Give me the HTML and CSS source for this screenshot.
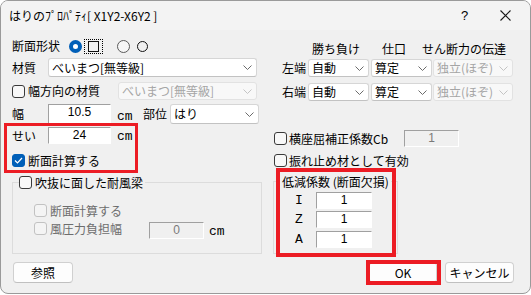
FILE: index.html
```html
<!DOCTYPE html>
<html lang="ja">
<head>
<meta charset="utf-8">
<title>はりのプロパティ</title>
<link rel="stylesheet" href="styles.css">
</head>
<body>
<div class="win">
  <div class="titlebar">
    <span class="title">はりのﾌﾟﾛﾊﾟﾃｨ[ X1Y2-X6Y2 ]</span>
    <span class="help">?</span>
    <svg class="close" width="11" height="11" viewBox="0 0 11 11"><path d="M0.5 0.5 L10.5 10.5 M10.5 0.5 L0.5 10.5" stroke="#1a1a1a" stroke-width="1.1" fill="none"/></svg>
  </div>
  <div class="main">
    <div class="left">
      <div class="row r1">
        <span class="lbl">断面形状</span>
        <span class="radio on"></span>
        <span class="focus"><span class="sq"></span></span>
        <span class="radio"></span>
        <span class="circ"></span>
      </div>
      <div class="row r2">
        <span class="lbl w36">材質</span>
        <div class="sel w209"><span class="st">べいまつ[無等級]</span><svg class="chev" width="9" height="5" viewBox="0 0 9 5"><polyline points="0.5,0.5 4.5,4.5 8.5,0.5" fill="none" stroke="#6b6b6b" stroke-width="1"/></svg></div>
      </div>
      <div class="row r3">
        <span class="cb"></span><span class="cbt">幅方向の材質</span>
        <div class="sel dis w139 ml18"><span class="st">べいまつ[無等級]</span><svg class="chev" width="9" height="5" viewBox="0 0 9 5"><polyline points="0.5,0.5 4.5,4.5 8.5,0.5" fill="none" stroke="#c4c4c4" stroke-width="1"/></svg></div>
      </div>
      <div class="row r4">
        <span class="lbl w36">幅</span>
        <span class="edit w63">10.5</span>
        <span class="cm">cm</span>
        <span class="lbl ml10">部位</span>
        <div class="sel w89 ml3"><span class="st">はり</span><svg class="chev" width="9" height="5" viewBox="0 0 9 5"><polyline points="0.5,0.5 4.5,4.5 8.5,0.5" fill="none" stroke="#6b6b6b" stroke-width="1"/></svg></div>
      </div>
      <div class="row r5">
        <span class="lbl w36">せい</span>
        <span class="edit w63">24</span>
        <span class="cm">cm</span>
      </div>
      <div class="row r6">
        <span class="cb on"><svg width="9" height="7" viewBox="0 0 9 7"><polyline points="1,3.5 3.5,6 8,1" fill="none" stroke="#fff" stroke-width="1.2"/></svg></span><span class="cbt">断面計算する</span>
      </div>
      <div class="group g1">
        <div class="legend"><span class="cb"></span><span class="cbt">吹抜に面した耐風梁</span></div>
        <div class="row gi1"><span class="cb dis"></span><span class="cbt dtext">断面計算する</span></div>
        <div class="row gi2"><span class="cb dis"></span><span class="cbt dtext w99">風圧力負担幅</span><span class="edit dis w55">0</span><span class="cm ml5">cm</span></div>
      </div>
      <div class="row rb"><button class="btn w60">参照</button></div>
    </div>
    <div class="right">
      <div class="row hdr">
        <span class="h1">勝ち負け</span><span class="h2">仕口</span><span class="h3">せん断力の伝達</span>
      </div>
      <div class="row end e1">
        <span class="lbl w26">左端</span>
        <div class="sel w61"><span class="st">自動</span><svg class="chev" width="9" height="5" viewBox="0 0 9 5"><polyline points="0.5,0.5 4.5,4.5 8.5,0.5" fill="none" stroke="#6b6b6b" stroke-width="1"/></svg></div>
        <div class="sel w61 ml2"><span class="st">算定</span><svg class="chev" width="9" height="5" viewBox="0 0 9 5"><polyline points="0.5,0.5 4.5,4.5 8.5,0.5" fill="none" stroke="#6b6b6b" stroke-width="1"/></svg></div>
        <div class="sel dis w80 ml1"><span class="st">独立(ほぞ)</span><svg class="chev" width="9" height="5" viewBox="0 0 9 5"><polyline points="0.5,0.5 4.5,4.5 8.5,0.5" fill="none" stroke="#c4c4c4" stroke-width="1"/></svg></div>
      </div>
      <div class="row end e2">
        <span class="lbl w26">右端</span>
        <div class="sel w61"><span class="st">自動</span><svg class="chev" width="9" height="5" viewBox="0 0 9 5"><polyline points="0.5,0.5 4.5,4.5 8.5,0.5" fill="none" stroke="#6b6b6b" stroke-width="1"/></svg></div>
        <div class="sel w61 ml2"><span class="st">算定</span><svg class="chev" width="9" height="5" viewBox="0 0 9 5"><polyline points="0.5,0.5 4.5,4.5 8.5,0.5" fill="none" stroke="#6b6b6b" stroke-width="1"/></svg></div>
        <div class="sel dis w80 ml1"><span class="st">独立(ほぞ)</span><svg class="chev" width="9" height="5" viewBox="0 0 9 5"><polyline points="0.5,0.5 4.5,4.5 8.5,0.5" fill="none" stroke="#c4c4c4" stroke-width="1"/></svg></div>
      </div>
      <div class="row cbrow">
        <span class="cb"></span><span class="cbt w115">横座屈補正係数Cb</span>
        <span class="edit dis w55">1</span>
      </div>
      <div class="row furerow">
        <span class="cb"></span><span class="cbt">振れ止め材として有効</span>
      </div>
      <div class="group g2">
        <div class="legend l2"><span>低減係数 (断面欠損)</span></div>
        <div class="row k k1"><span class="kl">I</span><span class="edit w56">1</span></div>
        <div class="row k k2"><span class="kl">Z</span><span class="edit w56">1</span></div>
        <div class="row k k3"><span class="kl">A</span><span class="edit w56">1</span></div>
      </div>
      <div class="row btns">
        <button class="btn w68 def">OK</button>
        <button class="btn w69">キャンセル</button>
      </div>
    </div>
  </div>
  <div class="hl hl1"></div>
  <div class="hl hl2"></div>
  <div class="hl hl3"></div>
</div>
</body>
</html>
```

FILE: styles.css
```css
* { box-sizing: border-box; margin: 0; padding: 0; }
html, body { background: #ffffff; }
body {
  font-family: "Noto Sans CJK JP", "Noto Sans", sans-serif;
  font-size: 12px;
  line-height: 14px;
  color: #000;
}
.win {
  position: relative;
  width: 531px;
  height: 294px;
  background: #f0f0f0;
  border: 1px solid #9a9a9a;
  border-radius: 8px;
  overflow: hidden;
  display: flex;
  flex-direction: column;
}
.titlebar {
  height: 29px;
  display: flex;
  align-items: center;
  background: #f3f3f3;
  padding-left: 8px;
}
.title { flex: 1; white-space: nowrap; }
.help {
  font-family: "Liberation Sans", sans-serif;
  font-size: 13px;
  width: 8px;
}
.close { margin-left: 31px; margin-right: 19px; }

.main { display: flex; flex: 1; }
.left { width: 264px; display: flex; flex-direction: column; }
.right { flex: 1; display: flex; flex-direction: column; }

.row { display: flex; align-items: center; white-space: nowrap; }
.lbl { display: inline-block; }
.w26 { width: 26px; }
.w36 { width: 36px; }
.w55 { width: 55px; }
.w56 { width: 56px; }
.w60 { width: 60px; }
.w61 { width: 61px; }
.w63 { width: 63px; }
.w68 { width: 68px; }
.w69 { width: 69px; }
.w80 { width: 80px; }
.w89 { width: 89px; }
.w99 { width: 99px; }
.w115 { width: 115px; }
.w139 { width: 139px; }
.w209 { width: 209px; }
.ml1 { margin-left: 1px; }
.ml2 { margin-left: 2px; }
.ml3 { margin-left: 3px; }
.ml5 { margin-left: 5px; }
.ml10 { margin-left: 10px; }
.ml18 { margin-left: 18px; }

/* left rows */
.left .row { padding-left: 11px; }
.r1 { margin-top: 8px; height: 16px; }
.r2 { margin-top: 4px; height: 19px; }
.r3 { margin-top: 5px; height: 18px; }
.r4 { margin-top: 4px; height: 20px; }
.r5 { margin-top: 3px; height: 17px; }
.r6 { margin-top: 10px; height: 13px; }

.radio {
  width: 13px; height: 13px; border-radius: 50%;
  border: 1px solid #5a5a5a; background: #f6f6f6;
  display: inline-block;
}
.radio.on {
  border: 4px solid #005fb8; background: #fff;
  margin-left: 9px;
}
.r1 .radio:not(.on) { margin-left: 14px; }
.focus {
  margin-left: 2px; width: 19px; height: 15px;
  border: 1px dotted #000;
  display: flex; align-items: center; justify-content: center;
}
.sq { width: 11px; height: 11px; border: 1.5px solid #111; }
.circ {
  margin-left: 7px; width: 11px; height: 11px; border-radius: 50%;
  border: 1.5px solid #111;
}

.sel {
  height: 100%;
  background: #fff;
  border: 1px solid #d6d6d6;
  border-bottom-color: #c2c2c2;
  border-radius: 3px;
  display: flex; align-items: center; justify-content: space-between;
  padding: 0 4px 0 3px;
}
.sel.dis { background: #f8f8f8; border-color: #e2e2e2; color: #a5a5a5; }
.chev { flex: none; }

.cb {
  width: 13px; height: 13px; flex: none;
  border: 1px solid #3a3a3a; border-radius: 3px;
  background: #f8f8f8;
  display: inline-flex; align-items: center; justify-content: center;
}
.cb.on { background: #005fb8; border-color: #005fb8; }
.cb.dis { border-color: #c2c2c2; background: #f4f4f4; }
.cbt { margin-left: 3px; }
.dtext { color: #6d6d6d; }

.edit {
  height: 100%;
  background: #fff;
  border-top: 1px solid #a0a0a0;
  border-left: 1px solid #a0a0a0;
  border-right: 1px solid #ffffff;
  border-bottom: 1px solid #ffffff;
  text-align: center;
  font-family: "Liberation Sans", sans-serif;
  font-size: 12px;
  line-height: 13px;
  padding-top: 1px;
}
.edit.dis { background: #f0f0f0; color: #7a7a7a; border-right-color: #fff; border-bottom-color: #fff; }
.cm {
  font-family: "Liberation Mono", monospace;
  font-size: 13px;
  width: 16px;
  margin-left: 6px;
  align-self: flex-end;
  line-height: 14px;
}

.group {
  border: 1px solid #dcdcdc;
  display: flex; flex-direction: column;
}
.left .group .row { padding-left: 21px; }
.g1 { margin-top: 15px; margin-left: 11px; width: 250px; height: 72px; }
.legend {
  display: flex; align-items: center;
  align-self: flex-start;
  margin-top: -7px; margin-left: 6px;
  height: 13px; padding: 0 2px 0 0;
  background: #f0f0f0;
}
.gi1 { margin-top: 15px; height: 13px; }
.gi2 { margin-top: 5px; height: 17px; align-items: flex-start; }
.gi2 .cm { margin-left: 5px; }

.rb { margin-top: 8px; height: 21px; }
.btn {
  height: 21px;
  background: #fdfdfd;
  border: 1px solid #d0d0d0;
  border-bottom-color: #c0c0c0;
  border-radius: 4px;
  font-family: "Noto Sans CJK JP", sans-serif;
  font-size: 12px;
  line-height: 14px;
  color: #000;
}
.left .rb .btn { margin-left: 1px; }

/* right column */
.hdr { margin-top: 12px; height: 14px; }
.h1 { margin-left: 47px; }
.h2 { margin-left: 22px; }
.h3 { margin-left: 16px; }
.end { padding-left: 17px; height: 18px; }
.e1 { margin-top: 3px; }
.e2 { margin-top: 6px; }
.cbrow { margin-top: 29px; height: 17px; padding-left: 9px; }
.cbrow .cbt { margin-left: 2px; }
.furerow { margin-top: 7px; height: 13px; padding-left: 9px; }
.furerow .cbt { margin-left: 2px; }
.g2 { margin-top: 14px; margin-left: 8px; width: 125px; height: 73px; }
.l2 { margin-left: 6px; padding: 0 2px; height: 14px; }
.k { height: 17px; padding-left: 18px; }
.k1 { margin-top: 3px; }
.k2 { margin-top: 2px; }
.k3 { margin-top: 3px; }
.kl {
  width: 14px; text-align: center;
  font-family: "Liberation Mono", monospace;
  font-size: 13px;
  margin-right: 10px;
}
.btns { margin-top: 8px; height: 21px; justify-content: flex-end; padding-right: 16px; }
.btns .def { margin-right: 8px; }

/* red highlight annotations over the dialog */
.hl {
  position: absolute;
  border: 4px solid #ec1c24;
  pointer-events: none;
}
.hl1 { left: 3px; top: 122px; width: 134px; height: 50px; border-width: 3px; }
.hl2 { left: 275px; top: 167px; width: 120px; height: 89px; }
.hl3 { left: 365px; top: 259px; width: 75px; height: 25px; }
```
